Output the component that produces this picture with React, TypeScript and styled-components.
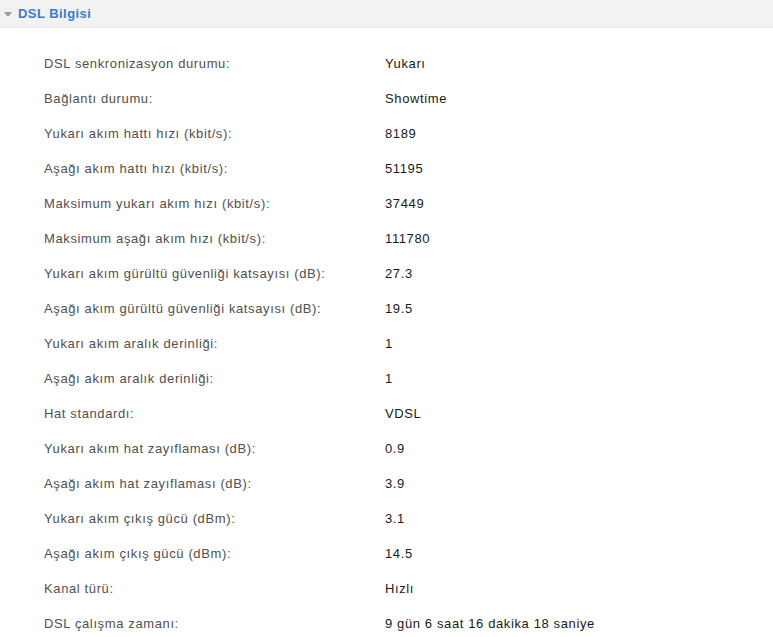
import React from "react";
import styled, { createGlobalStyle } from "styled-components";

const Global = createGlobalStyle`
  html, body { margin: 0; padding: 0; background: #fff; }
  body { font-family: Arial, "Liberation Sans", sans-serif; }
`;

const Page = styled.div`
  width: 773px;
  height: 637px;
  overflow: hidden;
  background: #fff;
`;

const Header = styled.div`
  height: 27px;
  display: flex;
  align-items: center;
  gap: 6px;
  padding-left: 4px;
  background: #f2f2f2;
  border-bottom: 1px solid #ebebeb;
`;

const Caret = styled.span`
  width: 0;
  height: 0;
  border-left: 4.5px solid transparent;
  border-right: 4.5px solid transparent;
  border-top: 5px solid #9a9a9a;
  margin-top: 2px;
`;

const Title = styled.span`
  font-family: Arial, "Liberation Sans", sans-serif;
  font-size: 13px;
  font-weight: bold;
  letter-spacing: 0.45px;
  color: #3b7ad0;
`;

const Table = styled.div`
  padding: 18px 0 0 44px;
  display: grid;
  grid-template-columns: 341px 1fr;
  grid-auto-rows: 35px;
`;

const Cell = styled.div<{ $value?: boolean }>`
  font-size: 13px;
  letter-spacing: 0.62px;
  color: ${(p) => (p.$value ? "#1a1a1a" : "#505050")};
  display: flex;
  align-items: center;
  white-space: nowrap;
`;

const rows: [string, string][] = [
  ["DSL senkronizasyon durumu:", "Yukarı"],
  ["Bağlantı durumu:", "Showtime"],
  ["Yukarı akım hattı hızı (kbit/s):", "8189"],
  ["Aşağı akım hattı hızı (kbit/s):", "51195"],
  ["Maksimum yukarı akım hızı (kbit/s):", "37449"],
  ["Maksimum aşağı akım hızı (kbit/s):", "111780"],
  ["Yukarı akım gürültü güvenliği katsayısı (dB):", "27.3"],
  ["Aşağı akım gürültü güvenliği katsayısı (dB):", "19.5"],
  ["Yukarı akım aralık derinliği:", "1"],
  ["Aşağı akım aralık derinliği:", "1"],
  ["Hat standardı:", "VDSL"],
  ["Yukarı akım hat zayıflaması (dB):", "0.9"],
  ["Aşağı akım hat zayıflaması (dB):", "3.9"],
  ["Yukarı akım çıkış gücü (dBm):", "3.1"],
  ["Aşağı akım çıkış gücü (dBm):", "14.5"],
  ["Kanal türü:", "Hızlı"],
  ["DSL çalışma zamanı:", "9 gün 6 saat 16 dakika 18 saniye"],
];

export default function App() {
  return (
    <Page>
      <Global />
      <Header>
        <Caret />
        <Title>DSL Bilgisi</Title>
      </Header>
      <Table>
        {rows.map(([l, v]) => (
          <React.Fragment key={l}>
            <Cell>{l}</Cell>
            <Cell $value>{v}</Cell>
          </React.Fragment>
        ))}
      </Table>
    </Page>
  );
}
